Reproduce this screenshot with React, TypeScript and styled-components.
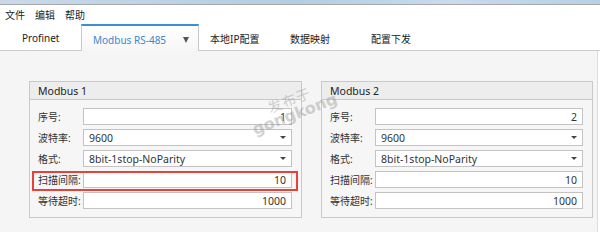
import React from 'react';
import styled, { createGlobalStyle } from 'styled-components';

const GlobalStyle = createGlobalStyle`
  body {
    margin: 0;
    background: #ffffff;
    font-family: "Noto Sans", "Noto Sans CJK SC", sans-serif;
    font-size: 10.5px;
    color: #222;
  }
`;

const Window = styled.div`
  position: relative;
  width: 600px;
  height: 237px;
  overflow: hidden;
  background: #ffffff;
`;

const TitleStrip = styled.div`
  height: 4px;
  background: linear-gradient(90deg, #c9d9e8 0%, #b3cde2 50%, #c7dced 75%, #b8d0e4 100%);
  border-bottom: 1px solid #a7a7a7;
`;

const MenuBar = styled.div`
  height: 19px;
  display: flex;
  align-items: center;
  gap: 10px;
  padding-left: 5px;
`;

const MenuItem = styled.span`
  font-size: 10px;
  color: #222;
`;

const TabBar = styled.div`
  height: 26px;
  display: flex;
  border-bottom: 1px solid #cdcdcd;
`;

const Tab = styled.div<{ $pad?: number; $w?: number }>`
  width: ${({ $w }) => $w ?? 80}px;
  display: flex;
  align-items: center;
  padding-left: ${({ $pad }) => $pad ?? 11}px;
  box-sizing: border-box;
  font-size: 10px;
  color: #222;
  padding-top: 2px;
`;

const ActiveTab = styled.div`
  width: 118px;
  box-sizing: border-box;
  display: flex;
  align-items: center;
  padding: 2px 9px 0 11px;
  margin-bottom: -1px;
  border-top: 2px solid #3d8ed6;
  border-left: 1px solid #c8c8c8;
  border-right: 1px solid #c8c8c8;
  background: linear-gradient(#ffffff, #f6f6f6);
  color: #3a87d2;
  font-size: 10px;
`;

const Caret = styled.span`
  margin-left: auto;
  width: 0;
  height: 0;
  border-left: 3.5px solid transparent;
  border-right: 3.5px solid transparent;
  border-top: 6px solid #555;
`;

const Content = styled.div`
  height: 181px;
  margin-right: 2px;
  background: #f5f5f5;
  border-right: 1px solid #dcdcdc;
  display: flex;
  gap: 19px;
  padding: 30px 0 0 29px;
  box-sizing: border-box;
`;

const Group = styled.div<{ $w: number }>`
  position: relative;
  width: ${({ $w }) => $w}px;
  height: 137px;
  box-sizing: border-box;
  border: 1px solid #c9c9c9;
  background: #f6f6f6;
`;

const GroupHeader = styled.div`
  height: 17px;
  display: flex;
  align-items: center;
  padding-left: 8px;
  background: #ededed;
  border-bottom: 1px solid #c9c9c9;
  font-size: 10.5px;
  color: #222;
`;

const GroupBody = styled.div`
  display: flex;
  flex-direction: column;
  gap: 4px;
  padding: 8px 9px 0 8px;
`;

const Row = styled.div`
  display: flex;
  align-items: center;
  height: 17px;
`;

const Label = styled.span`
  width: 45px;
  flex: none;
  font-size: 10px;
  color: #333;
  white-space: nowrap;
`;

const Field = styled.div<{ $right?: boolean }>`
  flex: 1;
  height: 17px;
  box-sizing: border-box;
  border: 1px solid #c3c3c3;
  background: #ffffff;
  display: flex;
  align-items: center;
  justify-content: ${({ $right }) => ($right ? 'flex-end' : 'flex-start')};
  padding: 0 5px;
  font-size: 10.5px;
  color: #333;
`;

const DropArrow = styled.span`
  margin-left: auto;
  width: 0;
  height: 0;
  border-left: 3px solid transparent;
  border-right: 3px solid transparent;
  border-top: 3px solid #444;
`;

const Highlight = styled.div`
  position: absolute;
  left: 2px;
  top: 89px;
  width: 266px;
  height: 20px;
  box-sizing: border-box;
  border: 2px solid #e8413a;
  pointer-events: none;
`;

const Watermark = styled.div`
  position: absolute;
  left: 245px;
  top: 109px;
  transform: rotate(-21deg);
  transform-origin: left top;
  color: rgba(140, 140, 140, 0.4);
  pointer-events: none;
  line-height: 1;
`;

const WatermarkCn = styled.div`
  font-family: "Noto Sans CJK SC", sans-serif;
  font-size: 14px;
  margin-left: 22px;
  letter-spacing: 1px;
`;

const WatermarkEn = styled.div`
  font-family: "DejaVu Sans", sans-serif;
  font-weight: bold;
  font-size: 16px;
  margin-top: 1px;
  position: relative;
  display: inline-block;
  &::after {
    content: '®';
    position: absolute;
    font-size: 6px;
    font-weight: normal;
    top: -3px;
    right: -7px;
  }
`;

type FieldDef = { label: string; value: string; kind: 'num' | 'select' };

const ModbusGroup = ({
  title, width, fields, highlight,
}: {
  title: string,
  width: number,
  fields: FieldDef[],
  highlight?: boolean
}) => (
  <Group $w={width}>
    <GroupHeader>{title}</GroupHeader>
    <GroupBody>
      {fields.map((f) => (
        <Row key={f.label}>
          <Label>{f.label}</Label>
          {f.kind === 'select' ? (
            <Field>
              {f.value}
              <DropArrow />
            </Field>
          ) : (
            <Field $right>{f.value}</Field>
          )}
        </Row>
      ))}
    </GroupBody>
    {highlight && <Highlight />}
  </Group>
);

const makeFields = (id: string): FieldDef[] => [
  { label: '序号:', value: id, kind: 'num' },
  { label: '波特率:', value: '9600', kind: 'select' },
  { label: '格式:', value: '8bit-1stop-NoParity', kind: 'select' },
  { label: '扫描间隔:', value: '10', kind: 'num' },
  { label: '等待超时:', value: '1000', kind: 'num' },
];

export default function App() {
  return (
    <Window>
      <GlobalStyle />
      <TitleStrip />
      <MenuBar>
        <MenuItem>文件</MenuItem>
        <MenuItem>编辑</MenuItem>
        <MenuItem>帮助</MenuItem>
      </MenuBar>
      <TabBar>
        <Tab $pad={22} $w={81}>Profinet</Tab>
        <ActiveTab>
          Modbus RS-485
          <Caret />
        </ActiveTab>
        <Tab>本地IP配置</Tab>
        <Tab>数据映射</Tab>
        <Tab $pad={12}>配置下发</Tab>
      </TabBar>
      <Content>
        <ModbusGroup title="Modbus 1" width={273} fields={makeFields('1')} highlight />
        <ModbusGroup title="Modbus 2" width={272} fields={makeFields('2')} />
      </Content>
      <Watermark>
        <WatermarkCn>发布于</WatermarkCn>
        <WatermarkEn>gongkong</WatermarkEn>
      </Watermark>
    </Window>
  );
}
